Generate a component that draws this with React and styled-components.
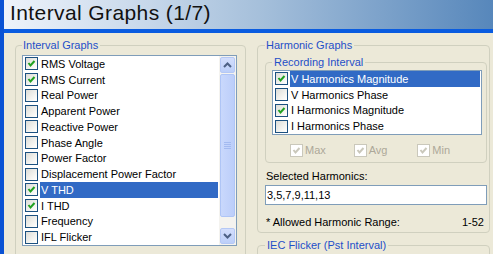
import React from "react";
import styled, { createGlobalStyle } from "styled-components";

const GlobalStyle = createGlobalStyle`
    html, body {
        margin: 0;
        padding: 0;
        background: #ece9d8;
    }
    body {
        font-family: "Liberation Sans", Arial, sans-serif;
        font-size: 11px;
        color: #000;
    }
    * {
        box-sizing: border-box;
    }
`;

const Window = styled.div`
    width: 493px;
    height: 254px;
    overflow: hidden;
    border-left: 4px solid #0a52d4;
    background: #ece9d8;
    display: flex;
    flex-direction: column;
`;

const TitleBar = styled.div`
    flex-shrink: 0;
    height: 33px;
    display: flex;
    align-items: center;
    padding: 0 0 4px 6px;
    border-bottom: 4px solid #0a5ce0;
    background: linear-gradient(to right, #eef3fa 0%, #c6d7ea 30%, #a6c0db 52%, #5787bb 100%);
    font-size: 21px;
    letter-spacing: 0.4px;
    color: #111;
`;

const Body = styled.div`
    flex: 1;
    display: flex;
    gap: 11px;
    padding-left: 11px;
`;

const Group = styled.fieldset`
    margin: ${p => p.$top || 0}px 0 0;
    padding: ${p => p.$pad};
    border: 1px solid #d0d0bf;
    border-radius: 4px;
    min-width: 0;
    ${p => p.$width && `width: ${p.$width}px;`}
`;

const Legend = styled.legend`
    padding: 0 2px 0 ${p => p.$indent || 1}px;
    line-height: 13px;
    color: #1f4fc8;
`;

const ListBox = styled.div`
    width: ${p => p.$width}px;
    height: ${p => p.$height}px;
    border: 1px solid #7f9db9;
    background: #fff;
    display: flex;
`;

const Rows = styled.div`
    flex: 1;
    display: flex;
    flex-direction: column;
`;

const Row = styled.div`
    height: 15.75px;
    display: flex;
    align-items: center;
    padding-left: 2px;
`;

const ItemText = styled.span`
    flex: 1;
    align-self: stretch;
    display: flex;
    align-items: center;
    padding-left: 1px;
    margin-right: 1px;
    white-space: nowrap;
    background: ${p => (p.$selected ? "#316ac5" : "transparent")};
    color: ${p => (p.$selected ? "#fff" : "#000")};
`;

const Box = styled.span`
    flex-shrink: 0;
    width: 13px;
    height: 13px;
    margin-right: 2px;
    border: 1px solid ${p => (p.$disabled ? "#cac8bb" : "#1c5180")};
    background: ${p => (p.$disabled ? "#fff" : "linear-gradient(135deg, #dcdcd7 0%, #f6f6f3 70%, #fff 100%)")};
    display: flex;
    align-items: center;
    justify-content: center;
`;

const CheckBox = ({ checked, disabled }) => (
    <Box $disabled={disabled}>
        {checked && (
            <svg width="11" height="11" viewBox="0 0 11 11">
                <polyline
                    points="2.5,5 4.5,7.5 8.5,3"
                    fill="none"
                    stroke={disabled ? "#cac8bb" : "#21a121"}
                    strokeWidth="2"/>
            </svg>
        )}
    </Box>
);

const ScrollBar = styled.div`
    width: 17px;
    padding: 1px 1px 1px 1px;
    display: flex;
    flex-direction: column;
    background: #f4f3ef;
`;

const ScrollButton = styled.div`
    height: 16px;
    border: 1px solid #b5c8f5;
    border-radius: 2px;
    background: linear-gradient(to bottom, #d3defc, #bccff9);
    display: flex;
    align-items: center;
    justify-content: center;
`;

const Track = styled.div`
    flex: 1;
    padding-top: 1px;
    padding-bottom: 11px;
    display: flex;
`;

const Thumb = styled.div`
    flex: 1;
    border: 1px solid #afc5f6;
    border-radius: 2px;
    background: linear-gradient(to right, #c9d8fc, #bccefa);
    display: flex;
    flex-direction: column;
    align-items: center;
    justify-content: center;
    gap: 1px;
`;

const Grip = styled.span`
    width: 7px;
    height: 1px;
    background: #a3baf0;
`;

const Chevron = ({ down }) => (
    <svg width="9" height="6" viewBox="0 0 9 6">
        <polyline
            points={down ? "1,1 4.5,4.5 8,1" : "1,5 4.5,1.5 8,5"}
            fill="none"
            stroke="#4d6185"
            strokeWidth="2"/>
    </svg>
);

const Column = styled.div`
    width: 233px;
    display: flex;
    flex-direction: column;
`;

const ChecksRow = styled.div`
    margin-top: 8px;
    height: 14px;
    display: flex;
    padding-left: 18px;
`;

const CheckItem = styled.div`
    width: 67px;
    display: flex;
    align-items: center;
    color: #aca899;
`;

const FieldLabel = styled.div`
    margin-top: 7px;
    padding-left: 1px;
    line-height: 13px;
`;

const TextField = styled.input`
    display: block;
    width: 100%;
    height: 20px;
    margin-top: 2px;
    padding: 0 0 0 1px;
    border: 1px solid #7f9db9;
    background: #fff;
    font-family: inherit;
    font-size: 11px;
    color: #000;
    outline: none;
`;

const RangeRow = styled.div`
    margin-top: 11px;
    padding: 0 3px 0 1px;
    line-height: 13px;
    display: flex;
    justify-content: space-between;
`;

const intervalItems = [
    { label: "RMS Voltage", checked: true },
    { label: "RMS Current", checked: true },
    { label: "Real Power" },
    { label: "Apparent Power" },
    { label: "Reactive Power" },
    { label: "Phase Angle" },
    { label: "Power Factor" },
    { label: "Displacement Power Factor" },
    { label: "V THD", checked: true, selected: true },
    { label: "I THD", checked: true },
    { label: "Frequency" },
    { label: "IFL Flicker" },
];

const harmonicItems = [
    { label: "V Harmonics Magnitude", checked: true, selected: true },
    { label: "V Harmonics Phase" },
    { label: "I Harmonics Magnitude", checked: true },
    { label: "I Harmonics Phase" },
];

const ListRows = ({ items }) => (
    <Rows>
        {items.map(item => (
            <Row key={item.label}>
                <CheckBox checked={item.checked}/>
                <ItemText $selected={item.selected}>{item.label}</ItemText>
            </Row>
        ))}
    </Rows>
);

const App = () => {
    return (
        <>
            <GlobalStyle/>
            <Window>
                <TitleBar>Interval Graphs (1/7)</TitleBar>

                <Body>
                    <Group $top={6} $pad="3px 7px 2px 6px" $width={231}>
                        <Legend>Interval Graphs</Legend>
                        <ListBox $width={215} $height={191}>
                            <ListRows items={intervalItems}/>
                            <ScrollBar>
                                <ScrollButton><Chevron/></ScrollButton>
                                <Track>
                                    <Thumb>
                                        <Grip/><Grip/><Grip/><Grip/>
                                    </Thumb>
                                </Track>
                                <ScrollButton><Chevron down/></ScrollButton>
                            </ScrollBar>
                        </ListBox>
                    </Group>

                    <Column>
                        <Group $top={6} $pad="3.5px 2px 3px 7px">
                            <Legend>Harmonic Graphs</Legend>

                            <Group $pad="1.5px 5px 5px 6px">
                                <Legend $indent={2}>Recording Interval</Legend>
                                <ListBox $width={210} $height={65}>
                                    <ListRows items={harmonicItems}/>
                                </ListBox>
                                <ChecksRow>
                                    {["Max", "Avg", "Min"].map(name => (
                                        <CheckItem key={name}>
                                            <CheckBox checked disabled/>
                                            {name}
                                        </CheckItem>
                                    ))}
                                </ChecksRow>
                            </Group>

                            <FieldLabel>Selected Harmonics:</FieldLabel>
                            <TextField readOnly value="3,5,7,9,11,13"/>
                            <RangeRow>
                                <span>* Allowed Harmonic Range:</span>
                                <span>1-52</span>
                            </RangeRow>
                        </Group>

                        <Group $top={6} $pad="4px 2px 20px 7px">
                            <Legend $indent={2}>IEC Flicker (Pst Interval)</Legend>
                        </Group>
                    </Column>
                </Body>
            </Window>
        </>
    );
};

export default App;
